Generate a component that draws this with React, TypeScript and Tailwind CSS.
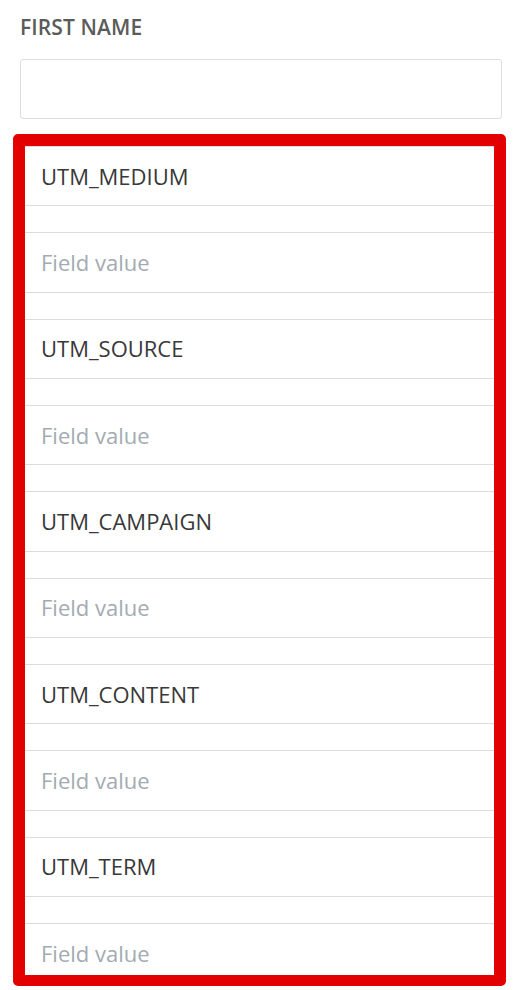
import React from "react";

const fields = ["UTM_MEDIUM", "UTM_SOURCE", "UTM_CAMPAIGN", "UTM_CONTENT", "UTM_TERM"];

export default function App() {
  return (
    <div
      className="relative w-[520px] h-[990px] overflow-hidden bg-white pl-[20px] pr-[18px] pt-[13px]"
      style={{ fontFamily: '"Open Sans", "Noto Sans", sans-serif' }}
    >
      <div className="text-[21px] leading-[28px] font-semibold text-[#5b5b5b] tracking-[0.1px]">FIRST NAME</div>
      <div className="mt-[18px] h-[60.3px] rounded-[3px] border border-[#dedede] bg-white" />
      <div className="mt-[26.9px] flex flex-col gap-[26px]">
        {fields.map((f) => (
          <React.Fragment key={f}>
            <div className="flex h-[60.3px] items-center border-y border-[#dcdcdc] bg-white pl-[21px] text-[22px] text-[#383838]">
              {f}
            </div>
            <div className="flex h-[60.3px] items-center border-y border-[#dcdcdc] bg-white pl-[21px] text-[22px] text-[#a3abb1]">
              Field value
            </div>
          </React.Fragment>
        ))}
      </div>
      <div className="pointer-events-none absolute left-[13px] top-[134px] h-[852px] w-[493px] rounded-[5px] border-[12px] border-b-[11px] border-[#e20000]" />
    </div>
  );
}
